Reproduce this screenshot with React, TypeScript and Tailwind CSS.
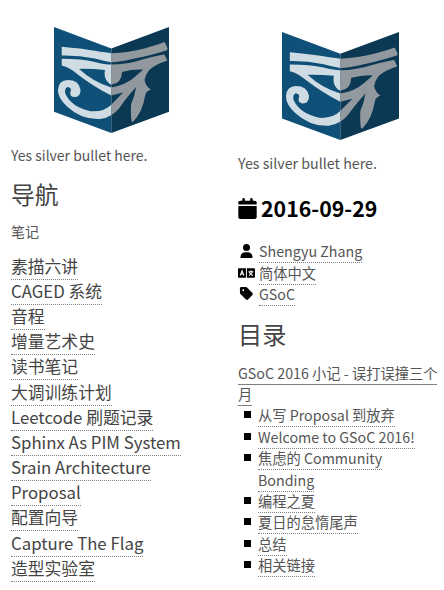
import { FaCalendar, FaUser, FaTag } from "react-icons/fa6";

function Eye() {
  return (
    <>
      <path d="M51 81 Q110 86 150 93 Q185 99 199 100 Q250 98 300 85 Q335 76 358 67 L367 85 L365 91 Q310 108 265 117 Q225 127 199 127 Q175 123 150 116 Q100 106 51 107 Z" />
      <path
        fillRule="evenodd"
        d="M51 117 Q110 117 150 126 Q180 134 199 134 Q245 134 295 118 Q335 107 357 104 L366 122 Q330 134 312 150 Q300 165 298 180 Q302 200 317 208 Q302 213 300 226 Q292 276 263 305 L259 302 Q256 276 258 252 Q268 230 273 201 Q247 230 231 252 Q205 292 165 296 Q110 299 66 258 Q38 232 40 208 Q42 181 69 180 Q102 180 107 208 Q108 231 89 231 Q74 230 77 216 Q82 203 68 201 Q58 205 62 221 Q80 261 137 273 Q180 276 203 249 L234 217 L199 226 Q150 202 100 164 Q75 143 51 137 Z M103 147 Q145 186 199 202 Q240 196 268 172 L294 149 Q265 147 231 156 Q230 190 199 194 Q174 182 180 150 Q140 146 103 147 Z"
      />
    </>
  );
}

function Logo({ id, className }: { id: string; className: string }) {
  return (
    <svg viewBox="28 22 343 316" preserveAspectRatio="none" className={className}>
      <defs>
        <clipPath id={id + "l"}><path d="M0 0H199V360H0Z" /></clipPath>
        <clipPath id={id + "r"}><path d="M199 0H405V360H199Z" /></clipPath>
      </defs>
      <path fill="#0f5079" d="M28 22L199 86V338L28 275Z" />
      <path fill="#0b3853" d="M199 86L371 22V275L199 338Z" />
      <g fill="#cfdce4" clipPath={`url(#${id}l)`}><Eye /></g>
      <g fill="#91999f" clipPath={`url(#${id}r)`}><Eye /></g>
    </svg>
  );
}

// Two solid tiles: a Latin "A" and a stylised character.
function LanguageIcon() {
  return (
    <svg viewBox="0 0 18 10" className="h-[10px] w-[18px]">
      <path d="M1 0H8.4V10H1Q0 10 0 9V1Q0 0 1 0ZM9.4 0H17Q18 0 18 1V9Q18 10 17 10H9.4Z" fill="currentColor" />
      <path d="M2.4 7.6L4.3 2.6L6.2 7.6M3.2 6H5.4M11 3.6H16.4M13.7 2.2V3.6M15.3 3.8Q14.3 6.6 11.5 7.6M12 4.2Q13.3 6.8 15.8 7.6" fill="none" stroke="#fff" strokeWidth="1.1" />
    </svg>
  );
}

const link = "border-b border-dotted border-[#808080] pb-px";
const iconBox = "mr-[4px] flex w-[17px] shrink-0 items-center justify-center text-black";
const notes = ["素描六讲", "CAGED 系统", "音程", "增量艺术史", "读书笔记", "大调训练计划", "Leetcode 刷题记录", "Sphinx As PIM System", "Srain Architecture", "Proposal", "配置向导", "Capture The Flag", "造型实验室"];
const sections = ["从写 Proposal 到放弃", "Welcome to GSoC 2016!", "焦虑的 Community Bonding", "编程之夏", "夏日的怠惰尾声", "总结", "相关链接"];
const meta = [
  { text: "Shengyu Zhang", icon: <FaUser className="h-[14px] w-[13px]" /> },
  { text: "简体中文", icon: <LanguageIcon /> },
  { text: "GSoC", icon: <FaTag className="size-[15px]" /> },
];

export default function App() {
  return (
    <div className="flex h-[590px] w-[444px] overflow-hidden bg-white font-['Noto_Sans_CJK_SC',sans-serif] text-[#444]">
      <aside className="w-[222px] pl-[11px] pt-[27px]">
        <Logo id="a" className="ml-[43px] h-[106px] w-[115px]" />
        <p className="mt-[12px] text-[14px] leading-[20px] text-[#555]">Yes silver bullet here.</p>
        <h3 className="mt-[12px] text-[23.8px] leading-[34px]">导航</h3>
        <p className="mt-[10px] text-[14px] leading-[20px] text-[#555]">笔记</p>
        <ul className="mt-[12.7px] text-[16.8px] leading-[25.17px]">
          {notes.map((t) => (
            <li key={t}><a className={link}>{t}</a></li>
          ))}
        </ul>
      </aside>
      <aside className="w-[222px] pl-[16px] pt-[32px] text-[14.25px] leading-[21.4px] text-[#555]">
        <Logo id="b" className="ml-[44px] h-[108px] w-[117px]" />
        <p className="mt-[12px]">Yes silver bullet here.</p>
        <h2 className="mt-[16px] flex h-[36px] items-center text-[21.3px] font-bold text-black">
          <FaCalendar className="mr-[4px] mt-[2px] h-[21px] w-[19px]" />
          <span>2016-09-29</span>
        </h2>
        <ul className="mt-[15px]">
          {meta.map((m) => (
            <li key={m.text} className="flex">
              <span className={iconBox}>{m.icon}</span>
              <span><a className={link}>{m.text}</a></span>
            </li>
          ))}
        </ul>
        <h3 className="mt-[12px] text-[24.2px] leading-[34px] text-[#444]">目录</h3>
        <p className="mt-[11px] w-[202px]"><a className="border-b border-[#808080] pb-px">GSoC 2016 小记 - 误打误撞三个月</a></p>
        <ul>
          {sections.map((t) => (
            <li key={t} className="flex w-[190px]">
              <span className="ml-[6px] mr-[7px] mt-[7px] size-[7px] shrink-0 bg-black" />
              <span><a className={link}>{t}</a></span>
            </li>
          ))}
        </ul>
      </aside>
    </div>
  );
}
